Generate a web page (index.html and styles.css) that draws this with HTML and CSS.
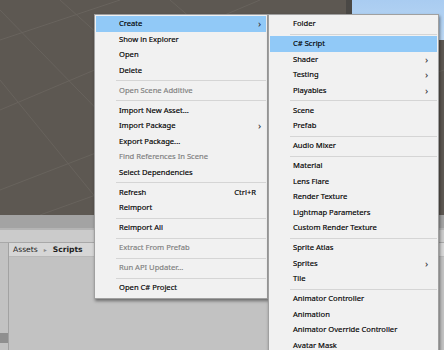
FILE: index.html
```html
<!DOCTYPE html>
<html lang="en">
<head>
    <meta charset="UTF-8">
    <title>Project - Create menu</title>
    <link rel="stylesheet" href="styles.css">
</head>
<body>
    <div class="editor">
        <div class="scene">
            <svg class="grid" width="444" height="215" viewBox="0 0 444 215">
                <g stroke="#68635d" stroke-width="1" fill="none">
                    <line x1="0" y1="40" x2="120" y2="0"/>
                    <line x1="0" y1="110" x2="260" y2="0"/>
                    <line x1="0" y1="190" x2="440" y2="20"/>
                    <line x1="40" y1="215" x2="444" y2="70"/>
                    <line x1="0" y1="10" x2="200" y2="215"/>
                    <line x1="60" y1="0" x2="300" y2="215"/>
                    <line x1="0" y1="80" x2="110" y2="215"/>
                    <line x1="170" y1="0" x2="420" y2="215"/>
                </g>
            </svg>
            <div class="gameview"></div>
        </div>
        <div class="toolbar">
            <div class="toolbar-top"></div>
            <div class="toolbar-bottom"></div>
        </div>
        <div class="project">
            <div class="tree">
                <div class="tree-sel"></div>
            </div>
            <div class="files">
                <div class="breadcrumb">
                    <span>Assets</span>
                    <span class="crumb-arrow">&#9656;</span>
                    <b>Scripts</b>
                </div>
            </div>
        </div>
    </div>

    <div class="menu main-menu">
        <div class="item active sub">Create</div>
        <div class="item">Show in Explorer</div>
        <div class="item">Open</div>
        <div class="item">Delete</div>
        <div class="sep"></div>
        <div class="item off">Open Scene Additive</div>
        <div class="sep"></div>
        <div class="item">Import New Asset...</div>
        <div class="item sub">Import Package</div>
        <div class="item">Export Package...</div>
        <div class="item off">Find References In Scene</div>
        <div class="item">Select Dependencies</div>
        <div class="sep"></div>
        <div class="item">Refresh<span class="key">Ctrl+R</span></div>
        <div class="item">Reimport</div>
        <div class="sep"></div>
        <div class="item">Reimport All</div>
        <div class="sep"></div>
        <div class="item off">Extract From Prefab</div>
        <div class="sep"></div>
        <div class="item off">Run API Updater...</div>
        <div class="sep"></div>
        <div class="item">Open C# Project</div>
    </div>

    <div class="menu sub-menu">
        <div class="item">Folder</div>
        <div class="sep"></div>
        <div class="item active">C# Script</div>
        <div class="item sub">Shader</div>
        <div class="item sub">Testing</div>
        <div class="item sub">Playables</div>
        <div class="sep"></div>
        <div class="item">Scene</div>
        <div class="item">Prefab</div>
        <div class="sep"></div>
        <div class="item">Audio Mixer</div>
        <div class="sep"></div>
        <div class="item">Material</div>
        <div class="item">Lens Flare</div>
        <div class="item">Render Texture</div>
        <div class="item">Lightmap Parameters</div>
        <div class="item">Custom Render Texture</div>
        <div class="sep"></div>
        <div class="item">Sprite Atlas</div>
        <div class="item sub">Sprites</div>
        <div class="item">Tile</div>
        <div class="sep"></div>
        <div class="item">Animator Controller</div>
        <div class="item">Animation</div>
        <div class="item">Animator Override Controller</div>
        <div class="item">Avatar Mask</div>
    </div>
</body>
</html>
```

FILE: styles.css
```css
*{
    padding: 0;
    margin: 0;
    box-sizing: border-box;
}

body{
    width: 444px;
    height: 350px;
    overflow: hidden;
    font-family: "Noto Sans", "Open Sans", sans-serif;
    font-size: 7.6px;
    color: #000;
}

.editor{
    width: 444px;
    height: 350px;
    display: flex;
    flex-direction: column;
    background: #c2c2c2;
}

/* scene view */
.scene{
    position: relative;
    height: 215px;
    background: #5d5852;
    overflow: hidden;
}

.grid{
    display: block;
}

.gameview{
    position: absolute;
    left: 346px;
    top: 0;
    width: 98px;
    height: 40px;
    border-left: 6px solid #4a4845;
    background: linear-gradient(#a9ccf1, #bcd8f4);
}

/* toolbar bands under the scene */
.toolbar{
    height: 28px;
    display: flex;
    flex-direction: column;
}

.toolbar-top{
    height: 15px;
    background: #a3a3a3;
    border-bottom: 2px solid #b4b4b4;
}

.toolbar-bottom{
    flex: 1;
    background: #cbcbcb;
    border-bottom: 1px solid #a8a8a8;
}

/* project window */
.project{
    flex: 1;
    display: flex;
}

.tree{
    width: 9px;
    border-right: 1px solid #a2a2a2;
    background: #c2c2c2;
    padding-top: 90px;
}

.tree-sel{
    height: 10px;
    background: #8f8f8f;
}

.files{
    flex: 1;
}

.breadcrumb{
    height: 14px;
    padding-left: 4px;
    display: flex;
    align-items: center;
    gap: 6px;
    background: #d6d6d6;
    border-bottom: 1px solid #b9b9b9;
    font-family: "DejaVu Sans", sans-serif;
    font-size: 7.6px;
    color: #1e1e1e;
}

.crumb-arrow{
    color: #8a8a8a;
    font-size: 6px;
}

/* context menus */
.menu{
    position: absolute;
    top: 14px;
    background: #f1f1f1;
    border: 1px solid #a0a0a0;
    padding: 1px 0 2px;
    box-shadow: 1px 2px 3px rgba(0, 0, 0, 0.45);
    -webkit-text-stroke: 0.15px;
}

.main-menu{
    left: 94px;
    width: 174px;
}

.sub-menu{
    left: 268px;
    width: 171px;
}

.item{
    position: relative;
    height: 15.5px;
    line-height: 15.5px;
    margin: 0 1px;
    padding-left: 23px;
    white-space: nowrap;
}

.item.active{
    background: #91c9f7;
}

.item.off{
    color: #7e7e7e;
}

.item.sub::after{
    content: "\203A";
    position: absolute;
    right: 5px;
    top: 0;
    font-size: 9px;
    color: #333;
}

.sub-menu .item.sub::after{
    right: 9px;
}

.key{
    position: absolute;
    right: 10px;
}

.sep{
    height: 1px;
    margin: 2px 1px 1.5px 21px;
    background: #d5d5d5;
}
```
